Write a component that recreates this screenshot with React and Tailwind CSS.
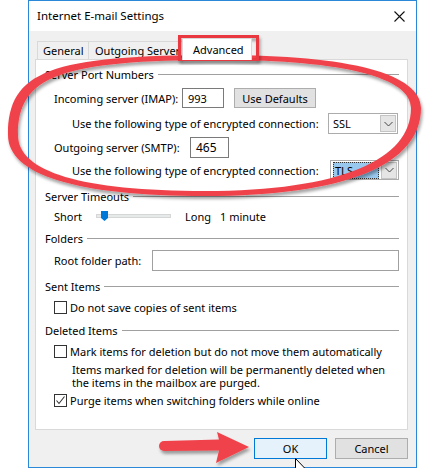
import React from "react";

function Chevron() {
  return (
    <svg width="9" height="6" viewBox="0 0 9 6">
      <polyline points="0.5,1 4.5,5 8.5,1" fill="none" stroke="#444" strokeWidth="1" />
    </svg>
  );
}

function Select({ value, active, w }) {
  return (
    <div className={`flex items-center h-full border border-[#acacac] bg-white ${w}`}>
      {active ? (
        <div className="ml-[2px] flex-1 h-[17px] bg-[#99c8ee] border border-dotted border-[#333] flex items-center pl-[1px]">
          {value}
        </div>
      ) : (
        <div className="ml-[4px] flex-1 flex items-center">{value}</div>
      )}
      <div className="ml-[2px] mr-[1px] w-[16px] h-[17px] bg-[#e5e5e5] border border-[#c4c4c4] flex items-center justify-center">
        <Chevron />
      </div>
    </div>
  );
}

function Heading({ title, mt }) {
  return (
    <div className={`flex items-center h-[20px] pl-[9px] pr-[8px] ${mt}`}>
      <span>{title}</span>
      <div className="ml-[4px] flex-1 h-px bg-[#a0a0a0]" />
    </div>
  );
}

function Checkbox({ checked }) {
  return (
    <div className="w-[13px] h-[13px] border border-[#333] bg-white flex items-center justify-center shrink-0">
      {checked && (
        <svg width="11" height="11" viewBox="0 0 11 11">
          <polyline points="1.5,5.5 4,8.5 9.5,1.5" fill="none" stroke="#333" strokeWidth="1.1" />
        </svg>
      )}
    </div>
  );
}

function Overlay() {
  const outer =
    "M 8 135 C 8 71, 50 55, 220 55 C 351 55, 421 74, 421 108 C 421 165, 345 196, 205 196 C 77 196, 8 175, 8 135 Z";
  const inner =
    "M 18 135 C 18 76, 60 60, 220 60 C 346 60, 411 78, 411 108 C 411 160, 340 191, 205 191 C 82 191, 18 172, 18 135 Z";
  return (
    <svg
      className="absolute inset-0 pointer-events-none"
      width="429"
      height="468"
      viewBox="0 0 429 468"
    >
      <defs>
        <filter id="sh" x="-10%" y="-10%" width="120%" height="130%">
          <feDropShadow dx="1.5" dy="3" stdDeviation="1.6" floodColor="#000" floodOpacity="0.35" />
        </filter>
      </defs>
      <path d={outer + " " + inner} fill="#f0434b" fillRule="evenodd" filter="url(#sh)" />
      <rect x="179.5" y="36.5" width="78" height="23" fill="none" stroke="#e9393f" strokeWidth="3" filter="url(#sh)" />
      <g filter="url(#sh)">
        <circle cx="164" cy="446" r="5" fill="#f0434b" />
        <polygon points="164,441 219,439.5 217,432 249,447 216,463 219,450.5 164,451" fill="#f0434b" />
      </g>
      <path
        d="M295.5 458.5 L295.5 474 L299 470.5 L302 477 L304 476 L301 469.5 L306 469.5 Z"
        fill="#fff"
        stroke="#000"
        strokeWidth="1"
      />
    </svg>
  );
}

export default function App() {
  return (
    <div className="relative w-[429px] h-[468px] bg-white overflow-hidden font-['Noto_Sans',sans-serif] text-[11px] text-black leading-none whitespace-nowrap">
      <div className="ml-[28px] w-[389px] h-[468px] border border-[#2b88d8] bg-[#f0f0f0] flex flex-col">
        {/* title bar */}
        <div className="h-[30px] bg-white flex items-center justify-between pl-[8px] pr-[11px] shrink-0">
          <span className="text-[11.5px]">Internet E-mail Settings</span>
          <svg width="11" height="11" viewBox="0 0 11 11">
            <path d="M0.5 0.5 L10.5 10.5 M10.5 0.5 L0.5 10.5" stroke="#111" strokeWidth="1.1" />
          </svg>
        </div>
        {/* tabs */}
        <div className="mt-[7px] ml-[6px] h-[21px] flex items-end shrink-0">
          <div className="ml-[2px] w-[52px] h-[18px] border-l border-t border-r border-[#d9d9d9] pl-[5px] flex items-center">
            General
          </div>
          <div className="w-[93px] h-[18px] border-t border-[#d9d9d9] pl-[6px] flex items-center overflow-hidden">
            Outgoing Server
          </div>
          <div className="relative z-10 -mb-px w-[70px] h-[22px] bg-white border-l border-t border-r border-[#d9d9d9] pl-[10px] flex items-center">
            Advanced
          </div>
        </div>
        {/* panel */}
        <div className="ml-[6px] w-[373px] h-[371px] bg-white border border-[#d9d9d9] flex flex-col shrink-0">
          <Heading title="Server Port Numbers" mt="mt-[4px]" />
          <div className="mt-[4px] h-[20px] flex items-center">
            <span className="ml-[18px] w-[128px]">Incoming server (IMAP):</span>
            <div className="w-[42px] h-[20px] border border-[#7a7a7a] flex items-center pl-[5px]">993</div>
            <div className="ml-[10px] w-[82px] h-[20px] bg-[#e1e1e1] border border-[#adadad] flex items-center justify-center">
              Use Defaults
            </div>
          </div>
          <div className="mt-[5px] h-[21px] flex items-center">
            <span className="ml-[36px] w-[256px]">Use the following type of encrypted connection:</span>
            <Select value="SSL" w="w-[70px]" />
          </div>
          <div className="mt-[3px] h-[21px] flex items-center">
            <span className="ml-[18px] w-[136px]">Outgoing server (SMTP):</span>
            <div className="w-[39px] h-[21px] border border-[#7a7a7a] flex items-center pl-[5px] text-[12px]">465</div>
          </div>
          <div className="mt-[2px] h-[20px] flex items-center">
            <span className="ml-[36px] w-[258px]">Use the following type of encrypted connection:</span>
            <Select value="TLS" active w="w-[69px]" />
          </div>
          <Heading title="Server Timeouts" mt="mt-[6px]" />
          <div className="h-[20px] flex items-center">
            <span className="ml-[18px] w-[42px]">Short</span>
            <div className="relative w-[75px] h-[4px] bg-[#e7eaea] border border-[#d6d6d6]">
              <svg className="absolute left-[4px] -top-[4px]" width="7" height="10" viewBox="0 0 7 10">
                <path d="M0 0 H7 V7 L3.5 10 L0 7 Z" fill="#0078d7" />
              </svg>
            </div>
            <span className="ml-[14px] w-[35px]">Long</span>
            <span>1 minute</span>
          </div>
          <Heading title="Folders" mt="mt-[2px]" />
          <div className="mt-[2px] h-[21px] flex items-center pr-[8px]">
            <span className="ml-[18px] w-[98px]">Root folder path:</span>
            <div className="flex-1 h-[21px] border border-[#a0a0a0]" />
          </div>
          <Heading title="Sent Items" mt="mt-[5px]" />
          <div className="mt-[1px] h-[20px] flex items-center pl-[18px]">
            <Checkbox />
            <span className="ml-[3px]">Do not save copies of sent items</span>
          </div>
          <Heading title="Deleted Items" mt="mt-[3px]" />
          <div className="mt-[1px] h-[20px] flex items-center pl-[18px]">
            <Checkbox />
            <span className="ml-[3px]">Mark items for deletion but do not move them automatically</span>
          </div>
          <div className="mt-[2px] ml-[36px] leading-[13px]">
            <div>Items marked for deletion will be permanently deleted when</div>
            <div>the items in the mailbox are purged.</div>
          </div>
          <div className="mt-[1px] h-[20px] flex items-center pl-[18px]">
            <Checkbox checked />
            <span className="ml-[3px]">Purge items when switching folders while online</span>
          </div>
        </div>
        {/* buttons */}
        <div className="mt-[8px] flex justify-end pr-[8px] gap-[8px]">
          <div className="w-[73px] h-[21px] bg-[#e5f1fb] border border-[#0078d7] flex items-center justify-center">OK</div>
          <div className="w-[73px] h-[21px] bg-[#e1e1e1] border border-[#adadad] flex items-center justify-center">Cancel</div>
        </div>
      </div>
      <Overlay />
    </div>
  );
}
